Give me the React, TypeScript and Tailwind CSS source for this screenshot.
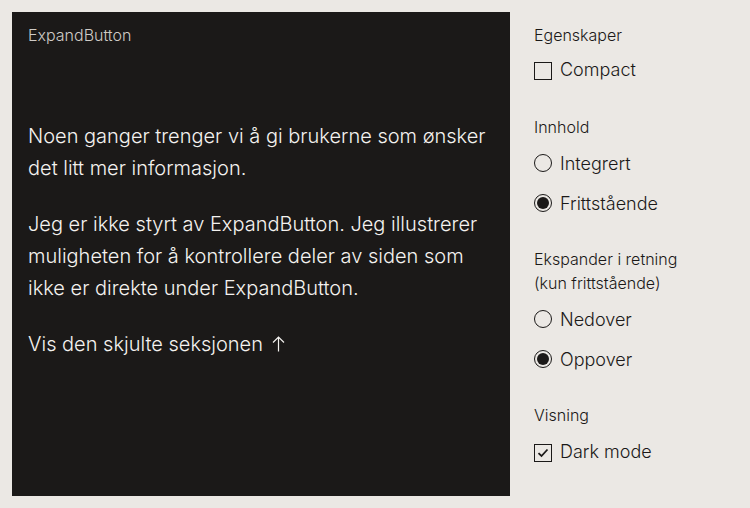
import { useState } from 'react';

const font = { fontFamily: 'Inter, "Noto Sans", sans-serif' };

function Checkbox({ label, checked, onChange }: { label: string; checked: boolean; onChange: () => void }) {
  return (
    <label className="flex items-center gap-[8px] h-[24px] cursor-pointer" onClick={onChange}>
      <span className="w-[18px] h-[18px] mt-[3px] border border-[#1b1918] flex items-center justify-center">
        {checked && (
          <svg width="12" height="10" viewBox="0 0 12 10" fill="none">
            <path d="M1.5 5.2 L4.5 8 L10.5 1.5" stroke="#1b1918" strokeWidth="1.8" />
          </svg>
        )}
      </span>
      <span className="text-[18px] text-[#1b1918] font-light">{label}</span>
    </label>
  );
}

function Radio({ label, checked, onChange }: { label: string; checked: boolean; onChange: () => void }) {
  return (
    <label className="flex items-center gap-[8px] h-[24px] cursor-pointer" onClick={onChange}>
      <span className="w-[18px] h-[18px] rounded-full border border-[#1b1918] flex items-center justify-center">
        {checked && <span className="w-[12px] h-[12px] rounded-full bg-[#1b1918]" />}
      </span>
      <span className="text-[18px] text-[#1b1918] font-light">{label}</span>
    </label>
  );
}

export default function App() {
  const [compact, setCompact] = useState(false);
  const [content, setContent] = useState('frittstaende');
  const [direction, setDirection] = useState('opp');
  const [dark, setDark] = useState(true);

  return (
    <div className="w-[750px] h-[508px] bg-[#ebe8e4] flex p-[12px] gap-[24px]" style={font}>
      {/* Example */}
      <div className="w-[498px] h-[484px] bg-[#1b1918] text-[#f4f2ef] px-[16px] pt-[11px]">
        <div className="text-[16px] leading-[24px] text-[#cfcbc6] font-light">ExpandButton</div>
        <div className="mt-[73px] text-[20px] leading-[32px] font-light">
          <p>Noen ganger trenger vi å gi brukerne som ønsker det litt mer informasjon.</p>
          <p className="mt-[24px]">
            Jeg er ikke styrt av ExpandButton. Jeg illustrerer muligheten for å kontrollere deler av siden som ikke er
            direkte under ExpandButton.
          </p>
          <button className="mt-[24px] flex items-center gap-[9px] text-[20px] leading-[32px] font-light">
            <span>Vis den skjulte seksjonen</span>
            <svg width="13" height="16" viewBox="0 0 13 16" fill="none">
              <path d="M6.5 15.5 V1 M1 6.5 L6.5 1 L12 6.5" stroke="#f4f2ef" strokeWidth="1.2" />
            </svg>
          </button>
        </div>
      </div>

      {/* Controls */}
      <div className="flex flex-col pt-[11px]">
        <div className="text-[16px] leading-[24px] text-[#1b1918] font-light">Egenskaper</div>
        <div className="mt-[10px] flex flex-col gap-[16px]">
          <Checkbox label="Compact" checked={compact} onChange={() => setCompact(!compact)} />
        </div>

        <div className="mt-[34px] text-[16px] leading-[24px] text-[#1b1918] font-light">Innhold</div>
        <div className="mt-[12px] flex flex-col gap-[16px]">
          <Radio label="Integrert" checked={content === 'integrert'} onChange={() => setContent('integrert')} />
          <Radio label="Frittstående" checked={content === 'frittstaende'} onChange={() => setContent('frittstaende')} />
        </div>

        <div className="mt-[32px] text-[16px] leading-[24px] text-[#1b1918] font-light">
          Ekspander i retning
          <br />
          (kun frittstående)
        </div>
        <div className="mt-[12px] flex flex-col gap-[16px]">
          <Radio label="Nedover" checked={direction === 'ned'} onChange={() => setDirection('ned')} />
          <Radio label="Oppover" checked={direction === 'opp'} onChange={() => setDirection('opp')} />
        </div>

        <div className="mt-[32px] text-[16px] leading-[24px] text-[#1b1918] font-light">Visning</div>
        <div className="mt-[12px] flex flex-col gap-[16px]">
          <Checkbox label="Dark mode" checked={dark} onChange={() => setDark(!dark)} />
        </div>
      </div>
    </div>
  );
}
